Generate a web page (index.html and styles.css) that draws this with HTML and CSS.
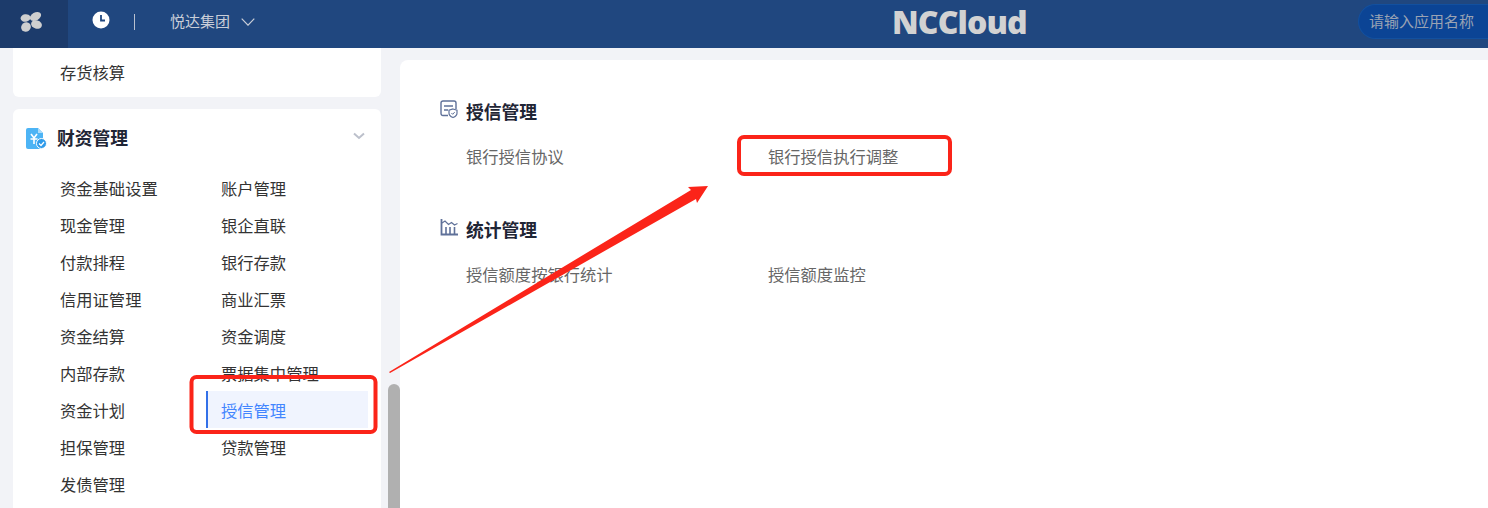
FILE: index.html
```html
<!DOCTYPE html>
<html lang="zh-CN">
  <head>
    <meta charset="UTF-8" />
    <meta name="viewport" content="width=device-width, initial-scale=1.0" />
    <title>NCCloud</title>
    <link rel="stylesheet" href="styles.css">
  </head>
  <body>
    <div class="page">
      <header class="topbar">
        <div class="logo-box">
          <svg width="24" height="22" viewBox="0 0 24 22">
            <ellipse cx="6.5" cy="7" rx="5" ry="3.8" fill="#cfcfcf" transform="rotate(-10 6.5 7)"/>
            <ellipse cx="16.5" cy="5.5" rx="6" ry="4" fill="#cfcfcf" transform="rotate(-30 16.5 5.5)"/>
            <ellipse cx="17.5" cy="13.5" rx="5.5" ry="4.2" fill="#cfcfcf" transform="rotate(15 17.5 13.5)"/>
            <ellipse cx="7" cy="16" rx="5" ry="4.6" fill="#cfcfcf" transform="rotate(-40 7 16)"/>
          </svg>
        </div>
        <svg class="clock" width="18" height="18" viewBox="0 0 18 18">
          <circle cx="9" cy="9" r="8.5" fill="#fff"/>
          <path d="M9 4v5.5h4" fill="none" stroke="#20477f" stroke-width="1.8"/>
        </svg>
        <div class="divider"></div>
        <div class="company">悦达集团</div>
        <svg class="company-arrow" width="14" height="8" viewBox="0 0 14 8">
          <path d="M.7.7 7 7.2 13.3.7" fill="none" stroke="#c9ced8" stroke-width="1.2"/>
        </svg>
        <div class="brand">NCCloud</div>
        <div class="search">请输入应用名称</div>
      </header>

      <div class="content">
        <aside class="sidebar">
          <div class="card card-top">
            <div class="nav-item">存货核算</div>
          </div>
          <div class="card card-menu">
            <div class="menu-head">
              <svg class="menu-icon" width="21" height="21" viewBox="0 0 21 21">
                <path d="M2 0h10l5 5v14a2 2 0 0 1-2 2H2a2 2 0 0 1-2-2V2a2 2 0 0 1 2-2z" fill="#4db4f5"/>
                <path d="M12 0l5 5h-5z" fill="#a9dcfb"/>
                <path d="M5 6l3 4 3-4M4.500 11h7M8 10v6" fill="none" stroke="#fff" stroke-width="1.600"/>
                <circle cx="15.500" cy="15.500" r="5" fill="#2f9bea" stroke="#fff"/>
                <path d="M13 15.500l2 2 3-3.500" fill="none" stroke="#fff" stroke-width="1.200"/>
              </svg>
              <span class="menu-title">财资管理</span>
              <svg class="menu-arrow" width="12" height="8" viewBox="0 0 12 8">
                <path d="M1 1.500 6 6l5-4.500" fill="none" stroke="#bcc0cb" stroke-width="2"/>
              </svg>
            </div>
            <div class="menu-grid">
              <div class="nav-item">资金基础设置</div>
              <div class="nav-item">账户管理</div>
              <div class="nav-item">现金管理</div>
              <div class="nav-item">银企直联</div>
              <div class="nav-item">付款排程</div>
              <div class="nav-item">银行存款</div>
              <div class="nav-item">信用证管理</div>
              <div class="nav-item">商业汇票</div>
              <div class="nav-item">资金结算</div>
              <div class="nav-item">资金调度</div>
              <div class="nav-item">内部存款</div>
              <div class="nav-item">票据集中管理</div>
              <div class="nav-item">资金计划</div>
              <div class="nav-item active">授信管理</div>
              <div class="nav-item">担保管理</div>
              <div class="nav-item">贷款管理</div>
              <div class="nav-item">发债管理</div>
            </div>
          </div>
        </aside>

        <div class="scroll-track"><div class="scroll-thumb"></div></div>

        <main class="panel">
          <section class="group">
            <h2 class="group-title">
              <svg width="18" height="19" viewBox="0 0 18 19">
                <path d="M8 15.500H3a2 2 0 0 1-2-2V3a2 2 0 0 1 2-2h11a2 2 0 0 1 2 2v6" fill="none" stroke="#5f7199" stroke-width="1.400"/>
                <path d="M4 6h9M4 10h4" fill="none" stroke="#5f7199" stroke-width="1.400"/>
                <path d="M13 9l4 1.200v3c0 2-2 3.500-4 4.300-2-.8-4-2.300-4-4.300v-3z" fill="#fff" stroke="#5f7199" stroke-width="1.200"/>
                <path d="M11.400 13l1.300 1.300 2-2.200" fill="none" stroke="#5f7199"/>
              </svg>
              授信管理
            </h2>
            <div class="group-items">
              <div class="group-item">银行授信协议</div>
              <div class="group-item">银行授信执行调整</div>
            </div>
          </section>
          <section class="group">
            <h2 class="group-title">
              <svg width="18" height="19" viewBox="0 0 18 19">
                <path d="M1.500 1v15.500H18" fill="none" stroke="#5f7199" stroke-width="1.800"/>
                <path d="M2 5l3-2 3.500 3.500 3-2 3 2.500 3-1.500" fill="none" stroke="#5f7199" stroke-width="1.200"/>
                <path d="M6 16V9M10 16V9M14.500 16V9" fill="none" stroke="#5f7199" stroke-width="1.600"/>
              </svg>
              统计管理
            </h2>
            <div class="group-items">
              <div class="group-item">授信额度按银行统计</div>
              <div class="group-item">授信额度监控</div>
            </div>
          </section>
        </main>
      </div>

      <!-- red marks drawn on top of the screenshot -->
      <svg class="marks" width="1488" height="508" viewBox="0 0 1488 508">
        <rect x="191.500" y="377" width="184" height="55" rx="5" fill="none" stroke="#fb2419" stroke-width="4"/>
        <rect x="739" y="137" width="211" height="37" rx="5" fill="none" stroke="#fb2419" stroke-width="4"/>
        <polygon points="389,372 691,190 688,187 708,186 697,203 696,199 390,373" fill="#fb2419"/>
      </svg>
    </div>
  </body>
</html>
```

FILE: styles.css
```css
* {
  box-sizing: border-box;
}
body {
  margin: 0;
  font-family: "Noto Sans CJK SC", "Liberation Sans", sans-serif;
  background-color: #f2f3f7;
}
.page {
  position: relative;
  width: 1488px;
  height: 508px;
  overflow: hidden;
}

/* top bar */
.topbar {
  display: flex;
  align-items: center;
  height: 48px;
  background-color: #20477f;
}
.logo-box {
  display: flex;
  justify-content: center;
  align-items: center;
  width: 68px;
  height: 48px;
  background-color: #1c3b6b;
  padding-right: 7px;
  padding-bottom: 5px;
}
.clock {
  margin-left: 24px;
  margin-bottom: 8px;
}
.divider {
  width: 1px;
  height: 16px;
  margin-left: 24px;
  margin-bottom: 5px;
  background-color: #b9c1cf;
}
.company {
  margin-left: 35px;
  margin-bottom: 7px;
  width: 60px;
  font-size: 15px;
  white-space: nowrap;
  color: #c9ced8;
}
.company-arrow {
  margin-left: 11px;
  margin-bottom: 5px;
}
.brand {
  margin-left: 637px;
  margin-bottom: 5px;
  font-family: "Open Sans", sans-serif;
  font-size: 32px;
  font-weight: 800;
  letter-spacing: -0.9px;
  color: #d2d2d2;
}
.search {
  align-self: flex-start;
  margin-top: 4px;
  margin-left: auto;
  width: 130px;
  height: 35px;
  padding-left: 10px;
  line-height: 31px;
  font-size: 15px;
  white-space: nowrap;
  color: #9aa3b3;
  background-color: #0b4495;
  border: 1px solid #12509f;
  border-right: none;
  border-radius: 18px 0 0 18px;
}

/* left side menu */
.content {
  display: flex;
  height: 460px;
}
.sidebar {
  width: 368px;
  margin-left: 13px;
}
.card {
  background-color: #fff;
}
.card-top {
  height: 49px;
  padding: 5px 0 0 47px;
  border-radius: 0 0 6px 6px;
}
.card-menu {
  height: 420px;
  margin-top: 12px;
  border-radius: 6px 6px 0 0;
}
.menu-head {
  display: flex;
  align-items: center;
  height: 58px;
  padding-left: 13px;
  padding-bottom: 2px;
}
.menu-icon {
  margin-top: 3px;
}
.menu-title {
  margin-left: 10px;
  font-size: 17.8px;
  font-weight: 700;
  color: #1f2535;
}
.menu-arrow {
  margin-left: auto;
  margin-right: 16px;
  margin-bottom: 3px;
}
.menu-grid {
  display: grid;
  grid-template-columns: 161px 162px;
  margin-top: 2px;
  margin-left: 32px;
}
.nav-item {
  height: 37px;
  padding-left: 15px;
  line-height: 39px;
  font-size: 16.3px;
  color: #333;
  white-space: nowrap;
}
.card-top .nav-item {
  padding-left: 0;
}
.nav-item.active {
  color: #4285ff;
  background-color: #f0f4fe;
  border-left: 2px solid #3370e8;
  padding-left: 13px;
}

/* scrollbar between menu and panel */
.scroll-track {
  width: 19px;
  padding-left: 7px;
}
.scroll-thumb {
  height: 124px;
  margin-top: 336px;
  background-color: #b0b0b0;
  border-radius: 6px 6px 0 0;
}

/* main panel */
.panel {
  flex: 1;
  margin-top: 12px;
  padding: 38px 0 0 40px;
  background-color: #fff;
  border-radius: 8px 0 0 0;
}
.group {
  margin-bottom: 48px;
}
.group-title {
  display: flex;
  align-items: center;
  gap: 8px;
  height: 26px;
  margin: 0;
  font-size: 17.8px;
  font-weight: 700;
  color: #1f2535;
}
.group-title svg {
  margin-bottom: 3px;
}
.group-items {
  display: grid;
  grid-template-columns: 302px 302px;
  margin-top: 20px;
  margin-left: 26px;
}
.group-item {
  height: 24px;
  line-height: 24px;
  font-size: 16.3px;
  color: #666;
  white-space: nowrap;
}

.marks {
  position: absolute;
  left: 0;
  top: 0;
}
```
